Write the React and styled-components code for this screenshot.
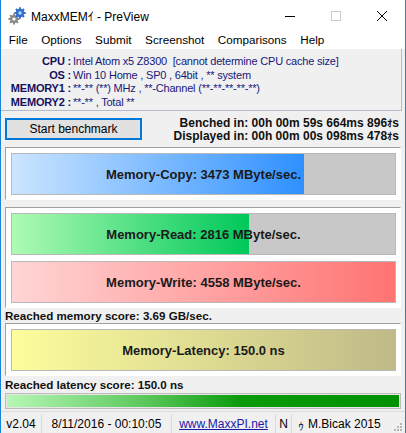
import styled, { createGlobalStyle } from 'styled-components';

const GlobalStyle = createGlobalStyle`
  html, body {
    margin: 0;
    padding: 0;
    background: #ffffff;
  }
  body {
    font-family: 'Liberation Sans', 'Noto Sans', sans-serif;
  }
`;

const Window = styled.div`
  width: 406px;
  height: 433px;
  box-sizing: border-box;
  border-left: 1px solid #1883d7;
  border-right: 1px solid #1883d7;
  background: #f0f0f0;
  display: flex;
  flex-direction: column;
  overflow: hidden;
`;

const TitleBar = styled.div`
  height: 31px;
  background: #fff;
  display: flex;
  align-items: center;
  flex-shrink: 0;
`;

const TitleIcon = styled.div`
  width: 18px;
  height: 18px;
  margin: 0 5px 0 7px;
  display: flex;
`;

const TitleText = styled.div`
  flex: 1;
  font-size: 12px;
  color: #000;
  .k {
    font-family: 'Noto Sans CJK JP', sans-serif;
  }
`;

const CaptionButton = styled.div`
  width: 46px;
  height: 31px;
  display: flex;
  align-items: center;
  justify-content: center;
`;

const MenuBar = styled.div`
  height: 18px;
  background: #fff;
  display: flex;
  align-items: center;
  padding-left: 1px;
  flex-shrink: 0;
`;

const MenuItem = styled.span`
  font-size: 11.7px;
  color: #000;
  padding: 0 6.8px;
  line-height: 18px;
`;

const InfoBox = styled.div`
  height: 62px;
  box-sizing: border-box;
  border-right: 1px solid #b4bcc8;
  border-bottom: 1px solid #b4bcc8;
  margin-right: 3px;
  padding-top: 6px;
  display: grid;
  grid-template-columns: 70px 1fr;
  grid-auto-rows: 13.5px;
  font-family: 'Liberation Sans', sans-serif;
  font-size: 11px;
  letter-spacing: -0.2px;
  color: #18187a;
  flex-shrink: 0;
`;

const InfoLabel = styled.div`
  text-align: right;
  white-space: nowrap;
  color: #121260;
  b {
    font-weight: bold;
  }
`;

const InfoValue = styled.div`
  padding-left: 2px;
  white-space: pre;
`;

const ActionRow = styled.div`
  display: flex;
  justify-content: space-between;
  align-items: flex-start;
  padding: 5px 6px 0 4px;
  height: 36px;
  box-sizing: border-box;
  flex-shrink: 0;
`;

const StartButton = styled.button`
  width: 137px;
  height: 22px;
  margin-top: 2px;
  box-sizing: border-box;
  border: 2px solid #0078d7;
  background: #e1e1e1;
  font-family: 'Liberation Sans', sans-serif;
  font-size: 12px;
  color: #000;
  padding: 0;
  cursor: pointer;
`;

const Timing = styled.div`
  font-family: 'Liberation Sans', sans-serif;
  font-weight: bold;
  font-size: 12px;
  text-align: right;
  color: #111;
  padding-top: 1px;
`;

const TimingLine = styled.div`
  height: 13px;
  line-height: 13px;
  .k {
    font-family: 'Noto Sans CJK JP', sans-serif;
    font-size: 10.5px;
    line-height: 10px;
    display: inline-block;
    height: 10px;
  }
`;

const Panel = styled.div`
  margin: 0 4px 0 4px;
  box-sizing: border-box;
  background: #fff;
  border-top: 1px solid #a0a0a0;
  border-left: 1px solid #a0a0a0;
  border-right: 1px solid #fff;
  border-bottom: 1px solid #fff;
  padding: 5px 4px 4px 5px;
  display: flex;
  flex-direction: column;
  gap: 6px;
  flex-shrink: 0;
`;

const PanelGap = styled.div`
  height: 7px;
  flex-shrink: 0;
`;

const Bar = styled.div`
  position: relative;
  height: 42px;
  box-sizing: border-box;
  border: 1px solid #b9b9b9;
  background: #c8c8c8;
  overflow: hidden;
`;

const Fill = styled.div`
  height: 100%;
  background: ${(p) => p.$gradient};
`;

const BarLabel = styled.div`
  position: absolute;
  inset: 0;
  display: flex;
  align-items: center;
  justify-content: center;
  font-family: 'Liberation Sans', sans-serif;
  font-weight: bold;
  font-size: 13px;
  color: #1a1a1a;
`;

const ScoreText = styled.div`
  font-family: 'Liberation Sans', sans-serif;
  font-weight: bold;
  font-size: 11.6px;
  color: #111;
  padding-left: 4px;
  height: ${(p) => p.$h}px;
  display: flex;
  align-items: center;
  flex-shrink: 0;
`;

const Progress = styled.div`
  margin: 0 4px;
  height: 16px;
  box-sizing: border-box;
  border: 1px solid #bcbcbc;
  padding: 1px;
  background: #e6e6e6;
  flex-shrink: 0;
`;

const ProgressFill = styled.div`
  height: 100%;
  background: linear-gradient(to right, #b6f7b6 0%, #5cc85c 35%, #0a9a0a 60%, #009000 100%);
`;

const StatusBar = styled.div`
  margin-top: 2px;
  height: 22px;
  border-top: 1px solid #dcdcdc;
  display: flex;
  align-items: stretch;
  font-family: 'Liberation Sans', sans-serif;
  font-size: 12px;
  color: #000;
  position: relative;
  flex-shrink: 0;
`;

const StatusCell = styled.div`
  width: ${(p) => (p.$w ? `${p.$w}px` : 'auto')};
  flex: ${(p) => (p.$w ? 'none' : 1)};
  display: flex;
  align-items: center;
  justify-content: ${(p) => (p.$left ? 'flex-start' : 'center')};
  padding-left: ${(p) => (p.$left ? '6px' : '0')};
  border-right: ${(p) => (p.$last ? 'none' : '1px solid #dadada')};
  margin: 2px 0 0 0;
  white-space: nowrap;
  .k {
    font-family: 'Noto Sans CJK JP', sans-serif;
    margin-right: 4px;
  }
`;

const Link = styled.a`
  color: #1a1aa6;
  text-decoration: underline;
`;

const Grip = styled.div`
  position: absolute;
  right: 2px;
  bottom: 2px;
  width: 9px;
  height: 9px;
  display: grid;
  grid-template-columns: repeat(3, 3px);
  grid-template-rows: repeat(3, 3px);
  span {
    width: 2px;
    height: 2px;
    background: #b8b8b8;
  }
`;

const GearIcon = () => (
  <svg width="18" height="18" viewBox="0 0 18 18">
    <g fill="#8a8a8a">
      <circle cx="6" cy="12" r="4" />
      {[0, 45, 90, 135].map((a) => (
        <rect key={a} x="5" y="6.5" width="2" height="11" transform={`rotate(${a} 6 12)`} />
      ))}
    </g>
    <circle cx="6" cy="12" r="1.6" fill="#fff" />
    <g fill="#2f6fd0">
      <circle cx="12" cy="6" r="4.2" />
      {[0, 45, 90, 135].map((a) => (
        <rect key={a} x="11" y="0.3" width="2" height="11.4" transform={`rotate(${a} 12 6)`} />
      ))}
    </g>
    <circle cx="12" cy="6" r="1.7" fill="#bcd4f5" />
  </svg>
);

const info = [
  ['CPU', 'Intel Atom x5 Z8300  [cannot determine CPU cache size]'],
  ['OS', 'Win 10 Home , SP0 , 64bit , ** system'],
  ['MEMORY1', '**-** (**) MHz , **-Channel (**-**-**-**-**)'],
  ['MEMORY2', '**-** , Total **'],
];

const MAX = 4558;

const App = () => {
  return (
    <>
      <GlobalStyle />
      <Window>
        <TitleBar>
          <TitleIcon>
            <GearIcon />
          </TitleIcon>
          <TitleText>
            MaxxMEM<span className='k'>ｲ</span> - PreView
          </TitleText>
          <CaptionButton>
            <svg width="10" height="10" viewBox="0 0 10 10">
              <line x1="0" y1="5.5" x2="10" y2="5.5" stroke="#000" strokeWidth="1" />
            </svg>
          </CaptionButton>
          <CaptionButton>
            <svg width="10" height="10" viewBox="0 0 10 10">
              <rect x="0.5" y="0.5" width="9" height="9" fill="none" stroke="#cccccc" strokeWidth="1" />
            </svg>
          </CaptionButton>
          <CaptionButton>
            <svg width="10" height="10" viewBox="0 0 10 10">
              <path d="M0 0 L10 10 M10 0 L0 10" stroke="#000" strokeWidth="1" />
            </svg>
          </CaptionButton>
        </TitleBar>
        <MenuBar>
          {['File', 'Options', 'Submit', 'Screenshot', 'Comparisons', 'Help'].map((m) => (
            <MenuItem key={m}>{m}</MenuItem>
          ))}
        </MenuBar>
        <InfoBox>
          {info.map(([label, value]) => [
            <InfoLabel key={label}>
              <b>{label}</b> <b>:</b>
            </InfoLabel>,
            <InfoValue key={label + 'v'}>{value}</InfoValue>,
          ])}
        </InfoBox>
        <ActionRow>
          <StartButton>Start benchmark</StartButton>
          <Timing>
            <TimingLine>
              Benched in: 00h 00m 59s 664ms 896<span className='k'>ｵ</span>s
            </TimingLine>
            <TimingLine>
              Displayed in: 00h 00m 00s 098ms 478<span className='k'>ｵ</span>s
            </TimingLine>
          </Timing>
        </ActionRow>
        <Panel>
          <Bar>
            <Fill
              style={{ width: `${(3473 / MAX) * 100}%` }}
              $gradient="linear-gradient(to right, #cce5ff, #2e90ff)"
            />
            <BarLabel>Memory-Copy: 3473 MByte/sec.</BarLabel>
          </Bar>
        </Panel>
        <PanelGap />
        <Panel>
          <Bar>
            <Fill
              style={{ width: `${(2816 / MAX) * 100}%` }}
              $gradient="linear-gradient(to right, #aefab4, #00c85a)"
            />
            <BarLabel>Memory-Read: 2816 MByte/sec.</BarLabel>
          </Bar>
          <Bar>
            <Fill
              style={{ width: `${(4558 / MAX) * 100}%` }}
              $gradient="linear-gradient(to right, #ffd5d5, #ff7373)"
            />
            <BarLabel>Memory-Write: 4558 MByte/sec.</BarLabel>
          </Bar>
        </Panel>
        <ScoreText $h={15}>Reached memory score: 3.69 GB/sec.</ScoreText>
        <Panel>
          <Bar>
            <Fill style={{ width: '100%' }} $gradient="linear-gradient(to right, #fdfd9c, #bfba88)" />
            <BarLabel>Memory-Latency: 150.0 ns</BarLabel>
          </Bar>
        </Panel>
        <ScoreText $h={17}>Reached latency score: 150.0 ns</ScoreText>
        <Progress>
          <ProgressFill />
        </Progress>
        <StatusBar>
          <StatusCell $w={40}>v2.04</StatusCell>
          <StatusCell $w={129}>8/11/2016 - 00:10:05</StatusCell>
          <StatusCell $w={103}>
            <Link>www.MaxxPI.net</Link>
          </StatusCell>
          <StatusCell $w={15}>N</StatusCell>
          <StatusCell $left $last>
            <span className='k'>ｩ</span>M.Bicak 2015
          </StatusCell>
          <Grip>
            {[0, 1, 2, 3, 4, 5, 6, 7, 8].map((i) => (
              <span key={i} style={{ visibility: [2, 4, 5, 6, 7, 8].includes(i) ? 'visible' : 'hidden' }} />
            ))}
          </Grip>
        </StatusBar>
      </Window>
    </>
  );
};

export default App;
